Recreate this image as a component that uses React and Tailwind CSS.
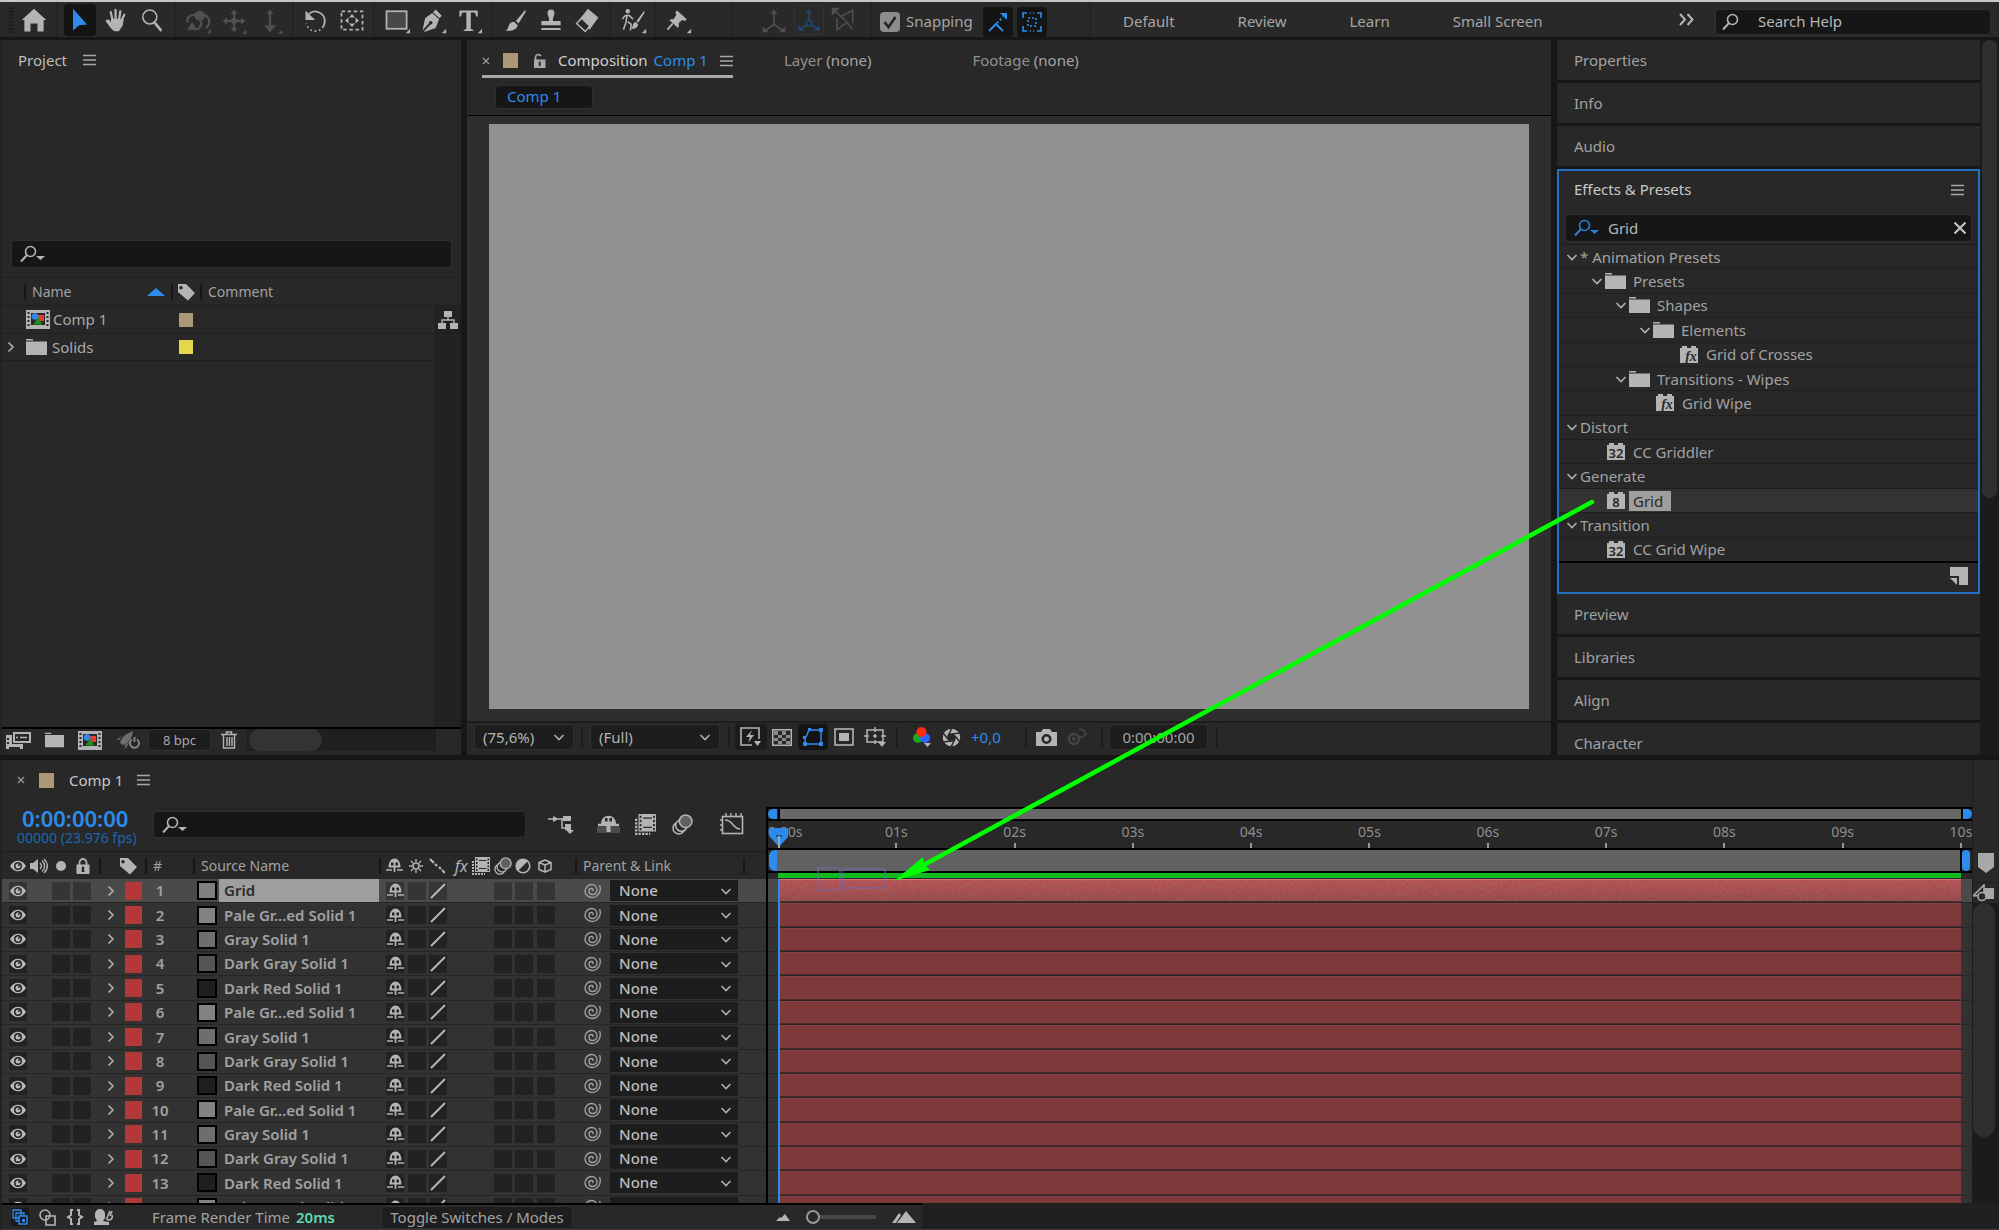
import React from "react";

/* ---------- icons ---------- */

function Svg({ w = 24, h = 24, vb, className = "", children }) {
  return (
    <svg width={w} height={h} viewBox={vb || `0 0 ${w} ${h}`} fill="none" className={`shrink-0 ${className}`} aria-hidden="true">
      {children}
    </svg>
  );
}

const tools = {
  home: (
    <path d="M16 3 2 16h3v13h7v-9h8v9h7V16h3z" fill="currentColor" />
  ),
  select: <path d="M8 3v25l7-6 9-1z" fill="#2d8ceb" />,
  hand: (
    <g stroke="currentColor" strokeLinecap="round" strokeLinejoin="round">
      <path d="M12 16 10 7M15.500 15V4.500M19.500 15 21 6M22 17l3.500-7" strokeWidth="2.600" />
      <path d="M11 15l13 1-1 6-4 6h-5l-4-4-5-7 2-1 4 4z" fill="currentColor" strokeWidth="1.500" />
    </g>
  ),
  zoom: (
    <g stroke="currentColor">
      <circle cx="13.500" cy="12.500" r="8" strokeWidth="1.800" />
      <path d="m19 19 7 8.500" strokeWidth="3" strokeLinecap="round" />
    </g>
  ),
  orbit: (
    <g>
      <path d="M5 19c-4-5 3-11 11-8M23 10c7 3 8 11 2 15M11 26c6 2 10-3 8-9" stroke="currentColor" strokeWidth="2.600" />
      <circle cx="18" cy="11" r="6" fill="currentColor" />
      <path d="m4 27 5-9 6 9z" fill="currentColor" />
      <path d="M31 31v-5l-5 5z" fill="currentColor" />
    </g>
  ),
  pan: (
    <g>
      <path d="M16 7v20M6 17h20" stroke="currentColor" strokeWidth="2.500" />
      <path d="m16 4 4 5h-8zM16 30l4-5h-8zM3 17l5-4v8zM29 17l-5-4v8z" fill="currentColor" />
      <circle cx="16" cy="17" r="3.500" fill="currentColor" />
      <path d="M30 32v-5l-5 5z" fill="currentColor" />
    </g>
  ),
  dolly: (
    <g>
      <path d="M16 8v15" stroke="currentColor" strokeWidth="2.500" />
      <path d="m16 4 4 5h-8zM16 30l7-8H9z" fill="currentColor" />
      <path d="M30 32v-5l-5 5z" fill="currentColor" />
    </g>
  ),
  rotate: (
    <g>
      <path d="M8 9c7-6 18-1 18 8 0 4-1 6-3 8" stroke="currentColor" strokeWidth="2" />
      <path d="M4 5v11h11z" fill="currentColor" />
      <path d="M21 27c-6 4-14 1-16-7" stroke="currentColor" strokeWidth="2" strokeDasharray="2 3" />
    </g>
  ),
  anchor: (
    <g>
      <rect x="4" y="6" width="24" height="21" stroke="currentColor" strokeWidth="2" strokeDasharray="4 3" />
      <path d="m16 9 3.500 4h-7zM16 24l3.500-4h-7zM8 16.500l4-3.500v7zM24 16.500 20 13v7z" fill="currentColor" />
    </g>
  ),
  rect: (
    <g>
      <rect x="4" y="6" width="23" height="20" fill="#484848" stroke="currentColor" strokeWidth="2" />
      <path d="M31 31v-5l-5 5z" fill="currentColor" />
    </g>
  ),
  pen: (
    <g>
      <path d="m19 4 7 7-2.500 3L16 7zM15 8l8 7-4 10-14 5 8-9a2 2 0 1 0-1.500-1.500L4 28 7 14z" fill="currentColor" />
      <path d="M31 31v-5l-5 5z" fill="currentColor" />
    </g>
  ),
  type: (
    <g>
      <path d="M5 5h21v7h-2c-.5-3.500-1-4.500-3-4.500h-3V25c0 1.500 1 2 3 2v1.500H10V27c2 0 3-.5 3-2V7.500h-3c-2 0-2.500 1-3 4.500H5z" fill="currentColor" />
      <path d="M31 31v-5l-5 5z" fill="currentColor" />
    </g>
  ),
  brush: (
    <path d="M28 4 17 17l3 3L28 7zM15 18l4 4c-1 5-6 7-14 6 3-1 3-3 4-6 1-3 4-4 6-4z" fill="currentColor" />
  ),
  stamp: (
    <path d="M16 4a4 4 0 0 1 4 4c0 3-2 5-2 9h9v5H5v-5h9c0-4-2-6-2-9a4 4 0 0 1 4-4zM5 25h22v2.500H5z" fill="currentColor" />
  ),
  eraser: (
    <g>
      <path d="m17 3 12 10-10 14L6 17z" fill="currentColor" />
      <path d="m4 20 6-6 9 9-5 6z" fill="#292929" stroke="currentColor" strokeWidth="1.600" />
    </g>
  ),
  roto: (
    <g>
      <circle cx="10" cy="6" r="2.500" fill="currentColor" />
      <path d="M4 15c2-4 5-5 8-4l4 4M9 11l-1 8-3 8M10 18l4 3-1 7" stroke="currentColor" strokeWidth="1.800" />
      <path d="m29 5-9 12 2 2 7-11zM19 18l3 3c-1 4-4 5-8 5 2-2 1-6 5-8z" fill="currentColor" />
      <path d="M31 31v-5l-5 5z" fill="currentColor" />
    </g>
  ),
  pin: (
    <g>
      <path d="m15 5 11 10-2 2-3-1-4 3c0 3 0 4-1 6l-10-9c2-1 4-1 5-1l3-5-1-3z" fill="currentColor" />
      <path d="m10 20-6 7" stroke="currentColor" strokeWidth="2" />
      <path d="M31 31v-5l-5 5z" fill="currentColor" />
    </g>
  ),
  axisLocal: (
    <g>
      <path d="M16 7v14l-10 7M16 21l10 7" stroke="currentColor" strokeWidth="1.800" />
      <path d="m16 4 4 5h-8zM3 23v7h7zM29 23v7h-7z" fill="currentColor" />
    </g>
  ),
  axisWorld: (
    <g>
      <path d="M16 7v10M13 22l-7 5M19 22l7 5" stroke="currentColor" strokeWidth="1.800" />
      <circle cx="16" cy="20" r="3.500" stroke="currentColor" strokeWidth="1.800" />
      <path d="m16 3 4 5h-8zM3 22v7h7zM29 22v7h-7z" fill="currentColor" />
    </g>
  ),
  axisView: (
    <g stroke="currentColor" strokeWidth="1.800">
      <path d="M8 14v13l11-8M26 20V5l-14 7M6 6l12 11M18 17l8 10" />
      <path d="M3 3v6l6-6z" fill="currentColor" />
    </g>
  ),
};

function Tool({ name, label, active, dim }) {
  return (
    <button
      type="button"
      aria-label={label}
      className={`flex h-8 w-8 items-center justify-center rounded-sm ${active ? "bg-[#141414]" : ""} ${dim ? "text-[#505050]" : "text-[#b4b4b4]"}`}
    >
      <Svg w={28} h={28} vb="0 0 32 32">{tools[name]}</Svg>
    </button>
  );
}

function Group({ className, children }) {
  return <div className={`flex h-full shrink-0 items-center gap-1 border-r-2 border-[#232323] ${className}`}>{children}</div>;
}

const Menu = ({ className = "" }) => (
  <Svg w={13} h={12} className={className}>
    <path d="M0 1.500h13M0 6h13M0 10.500h13" stroke="#a8a8a8" strokeWidth="1.500" />
  </Svg>
);

const Close = () => (
  <Svg w={8} h={8}>
    <path d="m1 1 6 6M7 1 1 7" stroke="#9a9a9a" strokeWidth="1.200" />
  </Svg>
);

const Search = ({ color = "#b4b4b4", arrow = true }) => (
  <Svg w={26} h={18}>
    <circle cx="10.500" cy="6.500" r="5" stroke={color} strokeWidth="1.600" />
    <path d="m7 10-6 6.500" stroke={color} strokeWidth="2" />
    {arrow && <path d="M16 11h9l-4.500 4z" fill={color} />}
  </Svg>
);

const Folder = ({ w = 21 }) => (
  <Svg w={w} h={16} vb="0 0 21 16">
    <path d="M0 0h7v1.500H0zM0 2.500h21V16H0z" fill="#b4b4b4" />
  </Svg>
);

const Chevron = ({ down, color = "#b0b0b0" }) => (
  <Svg w={12} h={12}>
    <path d={down ? "m1.500 4 4.500 4.500L10.500 4" : "m3.500 1.500 4.500 4.500-4.500 4.500"} stroke={color} strokeWidth="1.600" />
  </Svg>
);

const CompIcon = () => (
  <Svg w={24} h={19}>
    <path d="M0 0h24v19H0z" fill="#b4b4b4" />
    <path d="M5 3h14v12H5z" fill="#282828" />
    <path d="M1.500 2h2v2h-2zm0 4h2v2h-2zm0 4h2v2h-2zm0 4h2v2h-2zm19-12h2v2h-2zm0 4h2v2h-2zm0 4h2v2h-2zm0 4h2v2h-2z" fill="#282828" />
    <path d="M12 5h6v6h-6z" fill="#e33a34" />
    <circle cx="9" cy="6.500" r="3.300" fill="#2d8ceb" />
    <path d="m12 7 4.500 7.500h-9z" fill="#1c8f1c" />
  </Svg>
);

const Tag = () => (
  <Svg w={18} h={18}>
    <path fillRule="evenodd" d="M1 1h8l9 9-7 7.500L1 9zm3 2a1.800 1.800 0 1 0 0 3.600A1.800 1.800 0 0 0 4 3z" fill="#b4b4b4" />
  </Svg>
);

const Eye = () => (
  <Svg w={16} h={12}>
    <path fillRule="evenodd" d="M0 6c4-7 12-7 16 0-4 7-12 7-16 0zm8-4a4 4 0 1 0 0 8 4 4 0 0 0 0-8z" fill="#b8b8b8" />
    <circle cx="8" cy="6" r="2.500" fill="#b8b8b8" />
    <circle cx="9" cy="5" r="1" fill="#282828" />
  </Svg>
);

const Speaker = () => (
  <Svg w={18} h={16}>
    <path d="M0 5h3l5-4v14l-5-4H0z" fill="#b4b4b4" />
    <path d="M10 5c2 2 2 4 0 6M12 2.500c3.500 3 3.500 8 0 11M14 1c4.500 4 4.500 10 0 14" stroke="#b4b4b4" strokeWidth="1.400" />
  </Svg>
);

const Lock = () => (
  <Svg w={14} h={16}>
    <path d="M3.500 7V4.500a3.500 3.500 0 0 1 7 0V7" stroke="#b4b4b4" strokeWidth="1.800" />
    <path fillRule="evenodd" d="M.5 6.500h13V16H.5zM7 8.500a1.500 1.500 0 0 0-1 2.500l-.5 3h3L8 11a1.500 1.500 0 0 0-1-2.500z" fill="#b4b4b4" />
  </Svg>
);

const Unlock = () => (
  <Svg w={13} h={16}>
    <path d="M2.500 7V4A3 3 0 0 1 8 3" stroke="#a8a8a8" strokeWidth="1.700" />
    <path fillRule="evenodd" d="M1 6.500h11.500V15H1zM5.800 8.500v4.500h1.900V8.500z" fill="#a8a8a8" />
  </Svg>
);

const Shy = () => (
  <Svg w={17} h={15}>
    <path d="M2.500 9.500c0-12 12-12 12 0z" fill="#b4b4b4" />
    <path d="M5 4.500h2.500v3H5zM9.500 4.500H12v3H9.500z" fill="#222" />
    <path d="M0 12h6M11 12h6M8.500 9v5" stroke="#b4b4b4" strokeWidth="1.700" />
  </Svg>
);

const Sun = () => (
  <Svg w={16} h={16}>
    <circle cx="8" cy="8" r="3" stroke="#b4b4b4" strokeWidth="1.600" />
    <path d="M8 1v3M8 12v3M1 8h3M12 8h3M3 3l2 2M11 11l2 2M3 13l2-2M11 5l2-2" stroke="#b4b4b4" strokeWidth="1.400" />
  </Svg>
);

const DotLine = () => (
  <Svg w={16} h={16}>
    <path d="m1 1 4 4M6 6l2 2M10 9l2 2M13 12l3 3" stroke="#b4b4b4" strokeWidth="2.200" />
  </Svg>
);

const Slash = () => (
  <Svg w={16} h={16}>
    <path d="M1 15 15 1" stroke="#b8b8b8" strokeWidth="1.900" />
  </Svg>
);

const Film = ({ s = 18 }) => (
  <Svg w={s} h={s} vb="0 0 18 18">
    <path d="M1 4v13h12" stroke="#b4b4b4" strokeWidth="2" strokeDasharray="2 1" />
    <path d="M3 0h15v15H3z" fill="#b4b4b4" />
    <path d="M4 1.500h1.500v2H4zm0 3.500h1.500v2H4zm0 3.500h1.500v2H4zm0 3.500h1.500v2H4zM15.500 1.500H17v2h-1.500zm0 3.500H17v2h-1.500zm0 3.500H17v2h-1.500zm0 3.500H17v2h-1.500zM7 3h7.500v1H7zm0 8h7.500v1H7z" fill="#282828" />
  </Svg>
);

const Blur = ({ s = 18 }) => (
  <Svg w={s} h={s} vb="0 0 20 20">
    <circle cx="6.500" cy="13.500" r="5.500" stroke="#b4b4b4" strokeWidth="1.500" />
    <circle cx="9" cy="11" r="5.500" fill="#282828" stroke="#b4b4b4" strokeWidth="1.500" />
    <circle cx="13" cy="7" r="6" fill="#606060" stroke="#b4b4b4" strokeWidth="1.500" />
  </Svg>
);

const HalfCircle = () => (
  <Svg w={16} h={16}>
    <circle cx="8" cy="8" r="6.800" stroke="#b4b4b4" strokeWidth="1.600" />
    <path d="M3 13A7 7 0 0 1 13 3z" fill="#b4b4b4" />
  </Svg>
);

const Cube = () => (
  <Svg w={16} h={16}>
    <path d="m8 2 6 2.500v7L8 14l-6-2.500v-7zM2 4.500 8 7l6-2.500M8 7v7" stroke="#b4b4b4" strokeWidth="1.500" strokeLinejoin="round" />
  </Svg>
);

const Spiral = () => (
  <Svg w={18} h={16}>
    <path
      d="M15.500 2C18 8 14 14.500 8 14.500 4 14.500 1 11.500 1 8s3-6.500 6.500-6.500S13 4 13 7s-2 4.500-4.500 4.500S5 9.500 5 8s1-2.500 2.500-2.500S9.500 7 8.500 8"
      stroke="#a0a0a0"
      strokeWidth="1.400"
    />
  </Svg>
);

const Flow = () => (
  <Svg w={20} h={18}>
    <path d="M6 0h8v6H6zM0 12h8v6H0zM12 12h8v6h-8z" fill="#b4b4b4" />
    <path d="M10 6v3M4 12V9h12v3" stroke="#b4b4b4" strokeWidth="1.400" />
  </Svg>
);

/* Brick-shaped badge used for effects and presets */
const Brick = ({ label }) => (
  <svg width="18" height="17" viewBox="0 0 18 17" className="shrink-0" aria-hidden="true">
    <path d="M2 0h5v2h4V0h5v2h2v15H0V2h2z" fill="#b4b4b4" />
    <text
      x={label === "fx" ? "11" : "9"}
      y="14.500"
      textAnchor="middle"
      className={label === "fx" ? "fill-[#282828] font-['Liberation_Serif'] text-[14px] font-bold italic" : "fill-[#282828] font-['Noto_Sans'] text-[13px] font-semibold"}
    >
      {label}
    </text>
  </svg>
);

/* ---------- top bar ---------- */

function Toolbar() {
  return (
    <header className="flex h-[37px] shrink-0 items-center border-t-2 border-t-[#c3c9c9] bg-[#292929] text-[#a6a6a6]">
      <Group className="w-[58px] pl-2">
        <Svg w={6} h={26}>
          <path d="M3 0v26" stroke="#1c1c1c" strokeWidth="5" strokeDasharray="2 1.500" />
        </Svg>
        <Tool name="home" label="Home" />
      </Group>
      <Group className="w-[118px] justify-center">
        <Tool name="select" label="Selection" active />
        <Tool name="hand" label="Hand" />
        <Tool name="zoom" label="Zoom" />
      </Group>
      <Group className="w-[118px] justify-center">
        <Tool name="orbit" label="Orbit" dim />
        <Tool name="pan" label="Pan" dim />
        <Tool name="dolly" label="Dolly" dim />
      </Group>
      <Group className="w-[81px] justify-center">
        <Tool name="rotate" label="Rotate" />
        <Tool name="anchor" label="Anchor point" />
      </Group>
      <Group className="w-[118px] justify-center">
        <Tool name="rect" label="Rectangle" />
        <Tool name="pen" label="Pen" />
        <Tool name="type" label="Type" />
      </Group>
      <Group className="w-[118px] justify-center">
        <Tool name="brush" label="Brush" />
        <Tool name="stamp" label="Clone stamp" />
        <Tool name="eraser" label="Eraser" />
      </Group>
      <Group className="w-[45px] justify-center">
        <Tool name="roto" label="Roto brush" />
      </Group>
      <Group className="w-[77px] pl-1.5">
        <Tool name="pin" label="Puppet pin" />
      </Group>
      <Group className="w-[139px] justify-end pr-2.5">
        <Tool name="axisLocal" label="Local axis" dim />
        <span className="rounded-sm border border-[#333] text-[#1f4a78]">
          <button type="button" aria-label="World axis" className="flex h-7 w-7 items-center justify-center">
            <Svg w={26} h={26} vb="0 0 32 32">{tools.axisWorld}</Svg>
          </button>
        </span>
        <Tool name="axisView" label="View axis" dim />
      </Group>
      <Group className="w-[219px] pl-2 pt-1">
        <label className="flex items-center gap-1.5 text-[15px]">
          <span className="relative flex h-5 w-5">
            <input type="checkbox" defaultChecked className="peer h-5 w-5 appearance-none rounded-sm bg-[#8c8c8c]" />
            <svg viewBox="0 0 20 20" className="pointer-events-none absolute inset-0 hidden peer-checked:block" aria-hidden="true">
              <path d="m4.500 10 4 5 7-10" stroke="#222" strokeWidth="2.600" fill="none" />
            </svg>
          </span>
          Snapping
        </label>
        <button type="button" aria-label="Snap to edges" className="ml-1.5 flex h-[30px] w-[30px] items-center justify-center rounded-sm bg-[#141414]">
          <Svg w={20} h={20}>
            <path d="m1 19 7-7 7 7" stroke="#2d8ceb" strokeWidth="2" />
            <path d="m9 11 6-6" stroke="#2d8ceb" strokeWidth="2" strokeDasharray="2 2" />
            <path d="M12 1h7v7z" fill="#2d8ceb" />
          </Svg>
        </button>
        <button type="button" aria-label="Snap to features" className="flex h-[30px] w-[30px] items-center justify-center rounded-sm bg-[#141414]">
          <Svg w={20} h={20}>
            <path d="M1 6V1h4M15 1h4v5M19 14v5h-4M5 19H1v-5M8 1h1M11 1h1M8 19h1M11 19h1" stroke="#2d8ceb" strokeWidth="1.600" />
            <rect x="6" y="6" width="8" height="8" stroke="#2d8ceb" strokeWidth="1.600" strokeDasharray="2 2" />
          </Svg>
        </button>
      </Group>
      <nav className="flex flex-1 items-center gap-[63px] whitespace-nowrap pl-8 pt-1 text-[15px]">
        <button type="button">Default</button>
        <button type="button">Review</button>
        <button type="button">Learn</button>
        <button type="button">Small Screen</button>
      </nav>
      <button type="button" aria-label="More workspaces" className="mr-5">
        <Svg w={16} h={13}>
          <path d="m1 1 5 5.500L1 12M8.500 1l5 5.500-5 5.500" stroke="#b4b4b4" strokeWidth="2" />
        </Svg>
      </button>
      <label className="mr-2 mt-1 flex h-[26px] w-[276px] items-center gap-2.5 rounded-sm border border-[#303030] bg-[#161616] px-1.5">
        <Search arrow={false} />
        <input aria-label="Search Help" placeholder="Search Help" className="w-full bg-transparent text-[15px] outline-none placeholder:text-[#b8b8b8]" />
      </label>
    </header>
  );
}

/* ---------- project panel ---------- */

function ProjectPanel() {
  return (
    <section className="flex w-[461px] shrink-0 flex-col border-l-2 border-[#222] bg-[#282828]">
      <h2 className="flex h-10 items-center gap-4 pl-4 text-[15px] font-normal text-[#bdbdbd]">
        Project <Menu />
      </h2>
      <div className="min-h-40 shrink-0" />
      <label className="mx-[9px] flex h-7 shrink-0 items-center rounded-sm border border-[#2f2f2f] bg-[#161616] pl-2">
        <Search />
        <input aria-label="Search project" className="w-full bg-transparent outline-none" />
      </label>
      <div className="mt-[9px] flex min-h-0 flex-1 flex-col border-t border-[#1f1f1f]">
        <table className="block w-full flex-1 bg-linear-to-r from-transparent from-[432px] to-[#222] to-[433px]">
          <thead className="block bg-[#282828]">
            <tr className="flex h-7 items-center border-b border-[#1f1f1f] text-left text-sm text-[#a2a2a2]">
              <th scope="col" className="ml-[22px] flex h-4 w-[147px] items-center justify-between border-l-2 border-[#161616] pl-1.5 pr-1.5 font-normal">
                Name
                <Svg w={18} h={8}><path d="M0 8 9 0l9 8z" fill="#2d8ceb" /></Svg>
              </th>
              <th scope="col" aria-label="Label" className="flex h-4 w-[29px] items-center border-l-2 border-[#161616] pl-1"><Tag /></th>
              <th scope="col" className="flex h-4 items-center border-l-2 border-[#161616] pl-1.5 font-normal">Comment</th>
            </tr>
          </thead>
          <tbody className="block text-[15px] text-[#a8a8a8]">
            <tr className="flex h-7 items-center border-b border-[#1f1f1f]">
              <td className="flex w-[177px] items-center gap-[3px] pl-6"><CompIcon />Comp 1</td>
              <td className="flex-1"><span className="block h-3.5 w-3.5 bg-[#ab9875]" /></td>
              <td className="flex w-[26px] justify-center"><Flow /></td>
            </tr>
            <tr className="flex h-[27px] items-center border-b border-[#1f1f1f]">
              <td className="flex w-[177px] items-center gap-[5px] pl-[3px]">
                <button type="button" aria-label="Expand Solids" className="mr-1"><Chevron /></button>
                <Folder />Solids
              </td>
              <td><span className="block h-3.5 w-3.5 bg-[#e5d74a]" /></td>
            </tr>
          </tbody>
        </table>
      </div>
      <footer className="flex h-7 shrink-0 items-center border-t-2 border-black pb-1 pl-1 text-[#a8a8a8]">
        <button type="button" aria-label="Interpret footage" className="mr-3.5">
          <Svg w={25} h={17}>
            <path d="M0 3v14h3v-2h11v2h3v-5H6V3z" fill="#b4b4b4" />
            <path d="M7 0h18v11H7z" fill="#b4b4b4" />
            <path d="M9 2h14v7H9zM1 6h2v2H1zM1 10h2v2H1z" fill="#282828" />
            <path d="M10 5.500h2M14 5.500h7" stroke="#b4b4b4" strokeWidth="1.500" />
          </Svg>
        </button>
        <button type="button" aria-label="New folder" className="mr-3.5"><Folder w={19} /></button>
        <button type="button" aria-label="New composition" className="mr-3.5"><CompIcon /></button>
        <button type="button" aria-label="GPU acceleration" className="mr-2">
          <Svg w={24} h={18}>
            <path d="M17 0C9 3 5 7 4 12l3 2c5-1 9-6 10-14zM6 5 0 9h3zM9 14v4l5-7z" fill="#6e6e6e" />
            <path d="M16 8.500a4.500 4.500 0 1 0 5 0M18.500 6v5" stroke="#8a8a8a" strokeWidth="1.800" />
          </Svg>
        </button>
        <button type="button" className="h-[22px] w-[63px] rounded-sm border border-[#303030] bg-[#1d1d1d] text-[13px] leading-none">8 bpc</button>
        <button type="button" aria-label="Delete" className="ml-2.5 mr-2.5">
          <Svg w={16} h={18}>
            <path d="M0 3.500h16M5.500 3V1h5v2" stroke="#b4b4b4" strokeWidth="1.600" />
            <path d="M2.500 4v13h11V4M6 6v9M8.500 6v9M11 6v9" stroke="#b4b4b4" strokeWidth="1.400" />
          </Svg>
        </button>
        <div className="mr-[25px] h-full flex-1 bg-[#1f1f1f] px-0.5">
          <div className="h-[22px] w-[73px] rounded-full bg-[#333]" />
        </div>
      </footer>
    </section>
  );
}

/* ---------- composition panel ---------- */

function Bar() {
  return <span className="h-5 w-0.5 shrink-0 bg-[#1c1c1c]" />;
}

function Drop({ label, value, className }) {
  return (
    <span className={`relative flex h-[26px] items-center rounded-sm border border-[#303030] bg-[#1d1d1d] text-[#b4b4b4] ${className}`}>
      <select aria-label={label} className="h-full w-full appearance-none bg-transparent pl-2 text-[15px] outline-none">
        <option>{value}</option>
      </select>
      <span className="pointer-events-none absolute right-2"><Chevron down /></span>
    </span>
  );
}

function CompPanel() {
  return (
    <section className="flex min-w-0 flex-1 flex-col bg-[#282828]">
      <div className="flex h-[38px] shrink-0 items-stretch whitespace-nowrap pl-[15px] text-[15px] text-[#8f8f8f]">
        <h2 className="flex items-center border-b-[3px] border-[#a8a8a8] pt-1.5 text-[#d0d0d0]">
          <button type="button" aria-label="Close tab"><Close /></button>
          <span className="ml-[13px] h-[15px] w-[15px] bg-[#ab9875]" />
          <span className="ml-[15px] mr-3"><Unlock /></span>
          Composition
          <a href="#comp" className="ml-1.5 text-[#2d8ceb]">Comp 1</a>
          <Menu className="ml-3" />
        </h2>
        <button type="button" className="ml-[51px] pt-0.5">Layer <span className="text-[#a4a4a4]">(none)</span></button>
        <button type="button" className="ml-[101px] pt-0.5">Footage <span className="text-[#a4a4a4]">(none)</span></button>
      </div>
      <div className="flex h-[38px] shrink-0 items-center border-b border-black pl-7">
        <button type="button" className="h-6 w-[98px] rounded-sm border border-[#2f2f2f] bg-[#161616] pl-[11px] text-left text-[15px] leading-none text-[#2d8ceb]">
          Comp 1
        </button>
      </div>
      <div className="flex min-h-0 flex-1 bg-[#2e2e2e] pb-3 pl-[22px] pr-[22px] pt-2">
        <div className="flex-1 bg-[#919191]" />
      </div>
      <footer className="flex h-[34px] shrink-0 items-center border-t-2 border-[#1d1d1d] pb-1 pl-[7px]">
        <Drop label="Magnification" value="(75,6%)" className="mr-[7px] w-[100px]" />
        <Bar />
        <Drop label="Resolution" value="(Full)" className="ml-[7px] mr-2 w-[130px]" />
        <Bar />
        <button type="button" aria-label="Fast previews" className="ml-[5px] flex h-[26px] w-8 items-center justify-center rounded-sm bg-[#1c1c1c]">
          <Svg w={22} h={20}>
            <path d="M12 18H1V1h18v11" stroke="#b4b4b4" strokeWidth="1.600" />
            <path d="m12 3-6 7h4l-2 6 6-8h-4z" fill="#b4b4b4" />
            <path d="M14 14h7l-3.500 5z" fill="#b4b4b4" />
          </Svg>
        </button>
        <button type="button" aria-label="Transparency grid" className="ml-[5px]">
          <Svg w={20} h={17}>
            <rect x=".75" y=".75" width="18.500" height="15.500" stroke="#b4b4b4" strokeWidth="1.500" />
            <path d="M2 2h4v4H2zm8 0h4v4h-4zM6 6h4v3H6zm8 0h4v3h-4zM2 9h4v3H2zm8 0h4v3h-4zM6 12h4v3H6zm8 0h4v3h-4z" fill="#8a8a8a" />
          </Svg>
        </button>
        <button type="button" aria-label="Mask visibility" className="ml-1.5 flex h-[26px] w-[30px] items-center justify-center rounded-sm bg-[#141414]">
          <Svg w={22} h={20}>
            <path d="M3 17h16V3H8c-2 0-2 3-3 5s-2 2-2 3z" stroke="#2d8ceb" strokeWidth="1.500" />
            <path d="M1 15h4v4H1zM17 15h4v4h-4zM17 1h4v4h-4zM6 1h3v3H6zM1 9h3v3H1z" fill="#2d8ceb" />
          </Svg>
        </button>
        <button type="button" aria-label="Region of interest" className="ml-1.5">
          <Svg w={20} h={18}>
            <rect x="1" y="1" width="18" height="16" stroke="#b4b4b4" strokeWidth="1.600" />
            <path d="M5 5h10v8H5z" fill="#b4b4b4" />
          </Svg>
        </button>
        <button type="button" aria-label="Grid and guides" className="ml-2.5">
          <Svg w={22} h={20}>
            <path d="M3 3h16v12H3zM11 0v5M11 13v4M0 9h5M17 9h5" stroke="#b4b4b4" strokeWidth="1.500" />
            <path d="M9 9h4M11 7v4" stroke="#b4b4b4" strokeWidth="1.500" />
            <path d="M14 15h8l-4 5z" fill="#b4b4b4" />
          </Svg>
        </button>
        <span className="ml-2.5 flex items-center gap-3.5">
          <Bar />
          <button type="button" aria-label="Channels">
            <Svg w={20} h={22}>
              <circle cx="6" cy="12" r="5" fill="#18a818" />
              <circle cx="13" cy="12" r="5" fill="#2f63ff" />
              <circle cx="9.500" cy="6" r="5" fill="#ff2a12" />
              <path d="M12 17h7l-3.500 4z" fill="#b4b4b4" />
            </Svg>
          </button>
          <button type="button" aria-label="Reset exposure" className="-ml-1">
            <Svg w={19} h={19}>
              <circle cx="9.500" cy="9.500" r="6.500" stroke="#b4b4b4" strokeWidth="4.500" />
              <path d="m10 0-4 8M18 5l-8 1M18 14l-5-6M9 19l4-8M1 14l8-1M1 5l5 6" stroke="#282828" strokeWidth="1.500" />
            </Svg>
          </button>
        </span>
        <button type="button" className="ml-2.5 w-[54px] text-left text-[15px] leading-5 text-[#2d8ceb]">+0,0</button>
        <Bar />
        <button type="button" aria-label="Take snapshot" className="ml-[9px]">
          <Svg w={21} h={17}>
            <path fillRule="evenodd" d="M0 3h5l2-3h7l2 3h5v14H0zm10.500 2a5 5 0 1 0 0 10 5 5 0 0 0 0-10z" fill="#b4b4b4" />
            <circle cx="10.500" cy="10" r="2.500" fill="#b4b4b4" />
          </Svg>
        </button>
        <button type="button" aria-label="Show snapshot" className="ml-2.5 mr-3">
          <Svg w={22} h={20}>
            <circle cx="7" cy="12" r="5" stroke="#444" strokeWidth="2.500" />
            <circle cx="7" cy="12" r="2" fill="#444" />
            <path d="M12 3a4 4 0 1 1 4 7M12 10c4 1 6-1 7-4" stroke="#444" strokeWidth="1.800" />
          </Svg>
        </button>
        <Bar />
        <button type="button" className="ml-1.5 mr-2 h-[26px] w-[99px] rounded-sm border border-[#303030] bg-[#1d1d1d] text-[15px] leading-none text-[#a4a4a4]">
          0:00:00:00
        </button>
        <Bar />
      </footer>
    </section>
  );
}

/* ---------- right column ---------- */

function Collapsed({ title }) {
  return (
    <h2 className="mb-[3px] bg-[#282828] text-[15px] text-[#a2a2a2]">
      <button type="button" className="h-10 w-full pl-[17px] text-left">{title}</button>
    </h2>
  );
}

const effects = [
  { pad: "pl-[7px]", open: true, text: "* Animation Presets" },
  { pad: "pl-8", open: true, folder: true, text: "Presets" },
  { pad: "pl-14", open: true, folder: true, text: "Shapes" },
  { pad: "pl-20", open: true, folder: true, text: "Elements" },
  { pad: "pl-[121px]", brick: "fx", text: "Grid of Crosses" },
  { pad: "pl-14", open: true, folder: true, text: "Transitions - Wipes" },
  { pad: "pl-[97px]", brick: "fx", text: "Grid Wipe" },
  { pad: "pl-[7px]", open: true, text: "Distort" },
  { pad: "pl-12", brick: "32", text: "CC Griddler" },
  { pad: "pl-[7px]", open: true, text: "Generate" },
  { pad: "pl-12", brick: "8", text: "Grid", selected: true },
  { pad: "pl-[7px]", open: true, text: "Transition" },
  { pad: "pl-12", brick: "32", text: "CC Grid Wipe" },
];

function EffectsPanel() {
  return (
    <section className="border-2 border-[#2371c0] bg-[#282828]">
      <h2 className="flex h-[43px] items-center justify-between pb-1.5 pl-[15px] pr-3.5 text-[15px] text-[#c8c8c8]">
        Effects &amp; Presets <Menu />
      </h2>
      <label className="mx-1.5 flex h-7 items-center rounded-sm border border-[#2f2f2f] bg-[#161616] pl-2 pr-1">
        <Search color="#2d7fd6" />
        <input aria-label="Search effects" defaultValue="Grid" className="ml-2 flex-1 bg-transparent text-[15px] text-[#b8b8b8] outline-none" />
        <button type="button" aria-label="Clear search">
          <Svg w={14} h={14}><path d="m1.500 1.500 11 11M12.500 1.500l-11 11" stroke="#c8c8c8" strokeWidth="2" /></Svg>
        </button>
      </label>
      <ul className="mt-0.5 grid h-[319px] auto-rows-fr border-b-2 border-black text-[15px] text-[#a2a2a2]">
        {effects.map((e) => (
          <li key={e.text} className={`flex min-h-0 items-center border-t border-[#1f1f1f] leading-5 ${e.pad} ${e.selected ? "bg-[#333]" : ""}`}>
            {e.open && <button type="button" aria-label={`Collapse ${e.text}`} className="mr-0.5"><Chevron down /></button>}
            {e.folder && <Folder />}
            {e.brick && <Brick label={e.brick} />}
            {e.selected ? (
              <span className="ml-1 w-[42px] bg-[#9e9e9e] pl-1 text-[#2a2a2a]">{e.text}</span>
            ) : (
              <span className={e.folder ? "ml-[7px]" : e.brick ? "ml-2" : ""}>{e.text}</span>
            )}
          </li>
        ))}
      </ul>
      <footer className="flex h-[29px] items-start justify-end pr-2.5 pt-1">
        <button type="button" aria-label="New preset">
          <Svg w={18} h={18}>
            <path d="M0 0h18v18H9V9H0z" fill="#b4b4b4" />
            <path d="M0 11h7v7z" fill="#b4b4b4" />
          </Svg>
        </button>
      </footer>
    </section>
  );
}

function RightColumn() {
  return (
    <aside className="flex w-[442px] shrink-0 overflow-hidden">
      <div className="w-[423px] overflow-hidden">
        <Collapsed title="Properties" />
        <Collapsed title="Info" />
        <Collapsed title="Audio" />
        <EffectsPanel />
        <Collapsed title="Preview" />
        <Collapsed title="Libraries" />
        <Collapsed title="Align" />
        <Collapsed title="Character" />
      </div>
      <div className="flex-1 bg-[#1b1b1b] px-0.5">
        <div className="h-[64%] rounded-full bg-[#2f2f2f]" />
      </div>
    </aside>
  );
}

/* ---------- timeline ---------- */

const layerKinds = [
  ["Pale Gr...ed Solid 1", "bg-[#838383]"],
  ["Gray Solid 1", "bg-[#6e6e6e]"],
  ["Dark Gray Solid 1", "bg-[#555]"],
  ["Dark Red Solid 1", "bg-[#1f1f1f]"],
];

const layers = [
  { n: 1, name: "Grid", color: "bg-[#808080]" },
  ...Array.from({ length: 13 }, (_, i) => ({ n: i + 2, name: layerKinds[i % 4][0], color: layerKinds[i % 4][1] })),
];

function Cell({ sel, label, children }) {
  return (
    <button type="button" aria-label={label} className={`flex h-[18px] w-[18px] items-center justify-center ${sel ? "bg-[#353535]" : "bg-[#222]"}`}>
      {children}
    </button>
  );
}

function LayerRow({ layer }) {
  const sel = layer.n === 1;
  return (
    <tr className={`flex min-h-0 items-center border-b border-[#262626] ${sel ? "bg-[#4a4a4a]" : "bg-[#323232]"}`}>
      <td className="w-12 pl-[7px]"><Cell sel={sel} label="Visible"><Eye /></Cell></td>
      <td className="flex w-[49px] gap-[3px] pl-0.5"><Cell sel={sel} label="Solo" /><Cell sel={sel} label="Lock" /></td>
      <td className="w-[21px] pl-1.5"><button type="button" aria-label="Expand layer" className="flex h-5 items-center"><Chevron /></button></td>
      <td className="w-[25px] pl-[5px]"><span className="block h-[18px] w-[17px] bg-[#b53838]" /></td>
      <td className="w-12 pr-[18px] text-center text-[15px] font-semibold text-[#a2a2a2]">{layer.n}</td>
      <td className="w-[26px] pl-1"><span className={`block h-[19px] w-5 border-2 border-black ${layer.color}`} /></td>
      <td className={`flex w-40 items-center self-stretch whitespace-nowrap pl-[5px] text-[15px] font-semibold ${sel ? "bg-[#9e9e9e] text-[#2c2c2c]" : "text-[#a2a2a2]"}`}>{layer.name}</td>
      <td className="w-[197px] pl-[7px]">
        <span className="grid w-[172px] grid-cols-8">
          <Cell sel={sel} label="Shy"><Shy /></Cell>
          <Cell sel={sel} label="Collapse" />
          <Cell sel={sel} label="Quality"><Slash /></Cell>
          <span className="col-span-2" />
          <Cell sel={sel} label="Motion blur" />
          <Cell sel={sel} label="Adjustment" />
          <Cell sel={sel} label="3D layer" />
        </span>
      </td>
      <td className="flex w-[34px] justify-center"><Spiral /></td>
      <td className="relative flex h-[21px] w-32 items-center bg-[#1d1d1d]">
        <select aria-label={`Parent of layer ${layer.n}`} className="h-full w-full appearance-none bg-transparent pl-[9px] text-[15px] font-medium leading-none text-[#bcbcbc] outline-none">
          <option>None</option>
        </select>
        <span className="pointer-events-none absolute right-1.5"><Chevron down /></span>
      </td>
    </tr>
  );
}

function LayerTable() {
  return (
    <table className="flex min-h-0 flex-1 flex-col overflow-hidden border-t border-[#1c1c1c]">
      <thead className="block shrink-0">
        <tr className="flex h-[27px] items-center text-left text-sm text-[#a2a2a2]">
          <th scope="col" aria-label="Visibility, audio, solo and lock" className="flex w-[97px] items-center pl-2">
            <Eye />
            <span className="ml-1"><Speaker /></span>
            <span className="ml-2 h-2.5 w-2.5 rounded-full bg-[#b4b4b4]" />
            <span className="ml-2.5"><Lock /></span>
          </th>
          <th scope="col" aria-label="Label" className="flex h-4 w-[46px] items-center border-l-2 border-[#161616] pl-[18px]"><Tag /></th>
          <th scope="col" className="flex h-4 w-12 items-center border-l-2 border-[#161616] pl-1.5 font-normal">#</th>
          <th scope="col" className="flex h-4 w-[186px] items-center border-l-2 border-[#161616] pl-1.5 font-normal">Source Name</th>
          <th scope="col" aria-label="Switches" className="flex h-4 w-[196px] items-center border-l-2 border-[#161616] pl-[5px]">
            <span className="grid w-[172px] grid-cols-8 items-center">
              <Shy /><Sun /><DotLine />
              <i className="text-center font-['Noto_Sans'] text-base font-normal leading-none text-[#b4b4b4]">fx</i>
              <Film /><Blur /><HalfCircle /><Cube />
            </span>
          </th>
          <th scope="col" className="flex h-4 w-[170px] items-center border-x-2 border-[#161616] pl-1.5 font-normal">Parent &amp; Link</th>
        </tr>
      </thead>
      <tbody className="grid h-[341px] shrink-0 auto-rows-fr">
        {layers.map((l) => <LayerRow key={l.n} layer={l} />)}
      </tbody>
    </table>
  );
}

const Tick = () => <span className="h-[5px] w-0.5 bg-[#9a9a9a]" />;

function Tracks() {
  return (
    <div className="mt-[47px] flex min-w-0 flex-1 flex-col border-l-2 border-black">
      <div className="flex h-3.5 shrink-0 border-y-2 border-black">
        <span className="w-[9px] rounded-l-full bg-[#2d8ceb]" />
        <span className="ml-px flex-1 border-x-2 border-black bg-[#686868]" />
        <span className="w-[9px] rounded-r-full bg-[#2d8ceb]" />
      </div>
      <div className="relative flex h-[29px] shrink-0 border-b-2 border-black pl-2.5 pr-[11px] text-sm leading-[22px] text-[#8f8f8f]">
        <span className="flex-1"><span className="-ml-2.5 block">0:00s</span></span>
        {["01s", "02s", "03s", "04s", "05s", "06s", "07s", "08s", "09s"].map((t) => (
          <span key={t} className="flex flex-1">
            <span className="flex w-10 -translate-x-1/2 flex-col items-center">{t}<Tick /></span>
          </span>
        ))}
        <span className="flex w-0 justify-center">
          <span className="flex flex-col items-center">10s<Tick /></span>
        </span>
        <svg width="18" height="21" viewBox="0 0 18 21" className="absolute bottom-0 left-0.5" aria-hidden="true">
          <path d="M0 1h18v9L9 20 0 10z" fill="#2d8ceb" />
          <path d="M6 9h6" stroke="#174e86" strokeWidth="2" />
          <path d="M9 9v12" stroke="#a8a8a8" strokeWidth="2" />
        </svg>
      </div>
      <div className="flex h-[23px] shrink-0 border-b-2 border-black">
        <span className="ml-px w-2 rounded-l-md bg-[#2d8ceb]" />
        <span className="flex-1 border-r-2 border-black bg-[#616161]" />
        <span className="mr-0.5 w-2 rounded-md bg-[#2d8ceb]" />
      </div>
      <div className="flex h-1.5 shrink-0 pb-px pl-2.5 pr-[11px]"><span className="flex-1 bg-[#12b91f]" /></div>
      <div className="relative min-h-0 flex-1 overflow-hidden">
        <div className="grid h-[341px] auto-rows-fr">
          {layers.map((l) => (
            <div key={l.n} className={`flex min-h-0 border-b border-[#2a2626] pl-2.5 pr-[11px] ${l.n === 1 ? "bg-[#4a4a4a]" : "bg-[#323232]"}`}>
              <div className={`relative flex-1 border-y ${l.n === 1 ? "border-t-[#d07878] border-b-[#4a3030] bg-linear-to-b from-[#b44c4e] to-[#944547]" : "border-t-[#8c4244] border-b-[#4a2a2a] bg-[#80393a]"}`}>
                {l.n === 1 && (
                  <svg className="absolute inset-0 h-full w-full opacity-15" aria-hidden="true">
                    <filter id="grain">
                      <feTurbulence type="fractalNoise" baseFrequency="0.35" numOctaves="2" />
                      <feColorMatrix type="saturate" values="0" />
                    </filter>
                    <rect width="100%" height="100%" filter="url(#grain)" />
                  </svg>
                )}
              </div>
            </div>
          ))}
        </div>
        <span className="absolute inset-y-0 left-2.5 w-0.5 bg-[#2d8ceb]" />
      </div>
    </div>
  );
}

function Timeline() {
  return (
    <section className="flex h-[470px] shrink-0 flex-col border-l-2 border-[#222] bg-[#282828]">
      <div className="flex min-h-0 flex-1">
        <div className="flex w-[764px] shrink-0 flex-col">
          <h2 className="flex h-10 shrink-0 items-center pl-[15px] text-[15px] text-[#c8c8c8]">
            <button type="button" aria-label="Close timeline"><Close /></button>
            <span className="ml-3.5 mr-[15px] h-[15px] w-[15px] bg-[#ab9875]" />
            Comp 1
            <Menu className="ml-3.5" />
          </h2>
          <div className="flex h-[51px] shrink-0 items-start">
            <div className="flex w-[151px] flex-col whitespace-nowrap pl-[15px] pt-1.5 text-[#2d8ceb]">
              <button type="button" className="pl-[5px] text-left text-[22px] font-semibold leading-6">0:00:00:00</button>
              <span className="text-sm leading-4 text-[#1b69ad]">00000 (23.976 fps)</span>
            </div>
            <label className="mt-[11px] flex h-[27px] w-[373px] items-center rounded-sm border border-[#2f2f2f] bg-[#161616] pl-2">
              <Search />
              <input aria-label="Search layers" className="w-full bg-transparent outline-none" />
            </label>
            <div className="flex h-12 items-center pl-5">
              <button type="button" aria-label="Composition mini-flowchart" className="w-[51px] pl-0.5">
                <Svg w={26} h={20}>
                  <path d="M0 5h5M10 5h8M14 5v9h5M18 5h4" stroke="#b4b4b4" strokeWidth="1.500" />
                  <path d="m5 2 6 3-6 3zM15 2h8v5h-8zM17 10h6v6h-6zM18 16h8l-4 4z" fill="#b4b4b4" />
                </Svg>
              </button>
              <button type="button" aria-label="Hide shy layers" className="w-[38px]">
                <Svg w={23} h={20}>
                  <path d="M0 13h23v6H0z" fill="#4c4c4c" />
                  <path d="M4 10C4-1 19-1 19 10z" fill="#b4b4b4" />
                  <path d="M8 4h2.500v3.500H8zM12.500 4H15v3.500h-2.500z" fill="#282828" />
                  <path d="M1 11h21" stroke="#b4b4b4" strokeWidth="2.500" />
                  <path d="M11.500 9v9" stroke="#b4b4b4" strokeWidth="4" />
                </Svg>
              </button>
              <button type="button" aria-label="Frame blending" className="w-[37px]"><Film s={21} /></button>
              <button type="button" aria-label="Motion blur" className="w-12"><Blur s={21} /></button>
              <button type="button" aria-label="Graph editor">
                <Svg w={24} h={22}>
                  <rect x="2.500" y="3.500" width="20" height="17" stroke="#b4b4b4" strokeWidth="1.600" />
                  <path d="M5 7c8 0 8 9 15 9" stroke="#b4b4b4" strokeWidth="1.600" />
                  <path d="M6 0v3M11 0v3M16 0v3M21 0v3M0 7h3M0 12h3M0 17h3" stroke="#b4b4b4" strokeWidth="1.400" />
                </Svg>
              </button>
            </div>
          </div>
          <LayerTable />
        </div>
        <Tracks />
        <div className="flex w-[27px] shrink-0 flex-col border-l border-[#1c1c1c]">
          <button type="button" aria-label="Add marker" className="mt-[93px] flex h-[30px] shrink-0 justify-center border-b border-[#1f1f1f]">
            <Svg w={16} h={20}><path d="M0 0h16v14l-8 6-8-6z" fill="#a8a8a8" /></Svg>
          </button>
          <button type="button" aria-label="Comp button" className="flex h-5 shrink-0 items-center">
            <Svg w={21} h={18}>
              <path d="M10 4h11v11H10z" fill="#a8a8a8" />
              <path d="M0 12 11 1v10z" stroke="#a8a8a8" strokeWidth="1.600" fill="#282828" />
              <circle cx="9" cy="12.500" r="4" stroke="#a8a8a8" strokeWidth="1.600" fill="#282828" />
            </Svg>
          </button>
          <div className="min-h-0 flex-1 bg-[#1b1b1b] pr-1"><div className="h-[78%] rounded-full bg-[#2f2f2f]" /></div>
        </div>
      </div>
      <footer className="flex h-[27px] shrink-0 items-center border-b border-[#3a3a3a] bg-[#202020] text-[15px] text-[#a2a2a2]">
        <div className="flex h-full w-[920px] items-center border-t-2 border-black bg-[#282828] pl-[9px]">
          <button type="button" aria-label="Layer switches pane" className="mr-2.5 bg-[#1a1a1a]">
            <Svg w={18} h={18}>
              <path d="M2 2h8v8H2zM5 5h8v8H5z" fill="#1a1a1a" stroke="#2d8ceb" strokeWidth="1.300" />
              <path d="M8 8h8v8H8z" fill="#1a1a1a" stroke="#2d8ceb" strokeWidth="1.500" />
              <path d="M11 11h3v3h-3z" fill="#2d8ceb" />
            </Svg>
          </button>
          <button type="button" aria-label="Transfer controls pane" className="mr-2.5">
            <Svg w={17} h={17}>
              <circle cx="6" cy="6" r="5" stroke="#b4b4b4" strokeWidth="1.600" />
              <path d="M7 7h9v9H7z" stroke="#b4b4b4" strokeWidth="1.600" />
            </Svg>
          </button>
          <button type="button" aria-label="In and out pane" className="mr-2.5">
            <Svg w={18} h={16}>
              <path d="M7 1H5v5L2 8l3 2v5h2M11 1h2v5l3 2-3 2v5h-2" stroke="#b4b4b4" strokeWidth="2" />
            </Svg>
          </button>
          <button type="button" aria-label="Render time pane" className="mr-[38px]">
            <Svg w={20} h={16}>
              <path d="M6 0a5 5 0 0 1 5 5v4l-2 3 6 1v3H0v-3l3-1-2-4V5a5 5 0 0 1 5-5z" fill="#b4b4b4" />
              <path d="m13 9 3-7M12 9a3 3 0 1 0 6-3M18 2l-2 5" stroke="#b4b4b4" strokeWidth="1.600" />
            </Svg>
          </button>
          <span className="whitespace-nowrap">Frame Render Time</span>
          <b className="ml-1.5 font-semibold text-[#5cd9b4]">20ms</b>
          <button type="button" className="ml-[46px] h-[23px] w-[192px] whitespace-nowrap rounded-sm border border-[#303030] bg-[#1e1e1e] leading-none">Toggle Switches / Modes</button>
          <button type="button" aria-label="Zoom out" className="ml-auto mr-4">
            <Svg w={14} h={7}><path d="m0 7 4-4 1 1 4-4 5 7z" fill="#b4b4b4" /></Svg>
          </button>
          <input
            type="range"
            aria-label="Timeline zoom"
            defaultValue="0"
            className="mr-4 h-4 w-[70px] appearance-none bg-transparent [&::-webkit-slider-runnable-track]:h-1 [&::-webkit-slider-runnable-track]:bg-[#484848] [&::-webkit-slider-thumb]:-mt-[5px] [&::-webkit-slider-thumb]:h-3.5 [&::-webkit-slider-thumb]:w-3.5 [&::-webkit-slider-thumb]:appearance-none [&::-webkit-slider-thumb]:rounded-full [&::-webkit-slider-thumb]:border-2 [&::-webkit-slider-thumb]:border-[#9a9a9a] [&::-webkit-slider-thumb]:bg-[#282828]"
          />
          <button type="button" aria-label="Zoom in" className="mr-1.5">
            <Svg w={24} h={12}><path d="m0 12 7-10 2 2-5 8zM5 12l9-12 10 12z" fill="#b4b4b4" /></Svg>
          </button>
        </div>
      </footer>
    </section>
  );
}

/* Green pointer running from the Grid effect to the first layer */
function Pointer() {
  return (
    <svg viewBox="0 0 1999 1230" preserveAspectRatio="none" className="pointer-events-none absolute inset-0 h-full w-full" aria-hidden="true">
      <path d="M818 868h22v22h-22zM843 869h42v19h-42z" fill="none" stroke="#6a6fc0" strokeWidth="1.500" opacity=".6" />
      <path d="M1592 502 920 867" stroke="#00ff00" strokeWidth="4.500" strokeLinecap="round" fill="none" />
      <path d="m894 881 29-24 1 7 6 6z" fill="#00ff00" />
    </svg>
  );
}

export default function App() {
  return (
    <div className="relative flex h-screen flex-col overflow-hidden bg-[#171717] font-['Noto_Sans',sans-serif]">
      <Toolbar />
      <main className="flex min-h-0 flex-1 flex-col gap-[5px] pt-[3px]">
        <div className="flex min-h-0 flex-1 gap-[6px]">
          <ProjectPanel />
          <CompPanel />
          <RightColumn />
        </div>
        <Timeline />
      </main>
      <Pointer />
    </div>
  );
}
